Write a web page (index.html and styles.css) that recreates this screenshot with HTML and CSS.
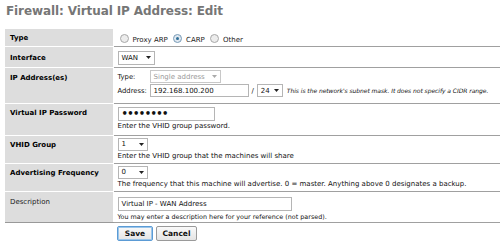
FILE: index.html
```html
<!DOCTYPE html>
<html>
<head>
<meta charset="utf-8">
<link rel="stylesheet" href="styles.css">
</head>
<body>
<div class="page">
  <h1 class="title">Firewall: Virtual IP Address: Edit</h1>
  <table class="form">
    <tr class="r-type">
      <td class="lbl req">Type</td>
      <td class="val">
        <span class="radio"></span><span class="rlabel">Proxy ARP</span>
        <span class="radio on"></span><span class="rlabel">CARP</span>
        <span class="radio"></span><span class="rlabel">Other</span>
      </td>
    </tr>
    <tr class="r-if">
      <td class="lbl req">Interface</td>
      <td class="val"><span class="sel sel-wan">WAN<svg class="arr" width="5" height="3" viewBox="0 0 5 3"><path d="M0 0H5L2.5 3Z"/></svg></span></td>
    </tr>
    <tr class="r-ip">
      <td class="lbl req">IP Address(es)</td>
      <td class="val">
        <div class="line"><span class="k">Type:</span><span class="sel sel-type dis">Single address<svg class="arr" width="5" height="3" viewBox="0 0 5 3"><path d="M0 0H5L2.5 3Z"/></svg></span></div>
        <div class="line"><span class="k">Address:</span><span class="inp inp-addr">192.168.100.200</span><span class="slash">/</span><span class="sel sel-mask">24<svg class="arr" width="5" height="3" viewBox="0 0 5 3"><path d="M0 0H5L2.5 3Z"/></svg></span><span class="note">This is the network's subnet mask. It does not specify a CIDR range.</span></div>
      </td>
    </tr>
    <tr class="r-pw">
      <td class="lbl req">Virtual IP Password</td>
      <td class="val">
        <span class="inp inp-pw">&#x2022;&#x2022;&#x2022;&#x2022;&#x2022;&#x2022;&#x2022;&#x2022;</span>
        <div class="help">Enter the VHID group password.</div>
      </td>
    </tr>
    <tr class="r-vhid">
      <td class="lbl req">VHID Group</td>
      <td class="val">
        <span class="sel sel-num">1<svg class="arr" width="5" height="3" viewBox="0 0 5 3"><path d="M0 0H5L2.5 3Z"/></svg></span>
        <div class="help">Enter the VHID group that the machines will share</div>
      </td>
    </tr>
    <tr class="r-adv">
      <td class="lbl req">Advertising Frequency</td>
      <td class="val">
        <span class="sel sel-num">0<svg class="arr" width="5" height="3" viewBox="0 0 5 3"><path d="M0 0H5L2.5 3Z"/></svg></span>
        <div class="help">The frequency that this machine will advertise. 0 = master. Anything above 0 designates a backup.</div>
      </td>
    </tr>
    <tr class="r-desc">
      <td class="lbl">Description</td>
      <td class="val">
        <span class="inp inp-desc">Virtual IP - WAN Address</span>
        <div class="help small">You may enter a description here for your reference (not parsed).</div>
      </td>
    </tr>
    <tr class="r-btn">
      <td class="blank"></td>
      <td class="btns"><span class="btn save">Save</span><span class="btn cancel">Cancel</span></td>
    </tr>
  </table>
</div>
</body>
</html>
```

FILE: styles.css
```css
html, body {
  margin: 0;
  padding: 0;
  background: #ffffff;
}
body {
  font-family: "DejaVu Sans", Verdana, sans-serif;
  font-size: 7px;
  color: #111;
}
.page {
  padding-left: 5px;
}
.title {
  margin: 0;
  padding: 4px 0 0 1px;
  height: 29px;
  box-sizing: border-box;
  font-size: 12px;
  font-weight: bold;
  color: #767676;
  letter-spacing: -0.1px;
}
.form {
  border-collapse: collapse;
  width: 495px;
}
.form td {
  padding: 0;
  vertical-align: top;
  box-sizing: border-box;
}
.lbl {
  width: 108px;
  background: #dddddd;
  border-bottom: 1px solid #ffffff;
  border-right: 1px solid #ffffff;
  padding: 5px 0 0 5px !important;
  font-weight: bold;
  font-size: 7px;
  color: #000;
}
.lbl:not(.req) {
  font-weight: normal;
  border-bottom-color: #999;
  color: #222;
}
.val {
  border-bottom: 1px solid #a0a0a0;
  padding: 2px 0 0 4px !important;
}
.r-type td { height: 17px; }
.r-if td { height: 21px; }
.r-ip td { height: 36px; }
.r-pw td { height: 32px; }
.r-vhid td { height: 28px; }
.r-adv td { height: 28px; }
.r-desc td { height: 31px; }
.r-type .lbl { padding-top: 5px !important; }
.r-type .val { padding-top: 5px !important; }
.r-if .lbl { padding-top: 7px !important; }
.r-if .val { padding-top: 4px !important; }
.r-ip .lbl { padding-top: 6px !important; }
.r-desc .lbl { padding-top: 6px !important; }

.radio {
  display: inline-block;
  width: 7px;
  height: 7px;
  border-radius: 50%;
  border: 1px solid #a8a8a8;
  background: #ececec;
  vertical-align: -1px;
  margin: 0 4px 0 2px;
  position: relative;
}
.radio.on {
  border-color: #7a9cb8;
  background: #dfe8f0;
}
.radio.on::after {
  content: "";
  position: absolute;
  left: 2px;
  top: 2px;
  width: 3px;
  height: 3px;
  border-radius: 50%;
  background: #2f6f98;
}
.rlabel {
  margin-right: 1px;
  color: #222;
}
.sel, .inp {
  display: inline-flex;
  align-items: center;
  box-sizing: border-box;
  height: 13px;
  border: 1px solid #b5b5b5;
  background: #fff;
  padding: 0 3px;
  vertical-align: middle;
  color: #111;
}
.sel .arr {
  margin-left: auto;
  fill: #222;
}
.sel.dis {
  color: #9a9a9a;
  border-color: #c8c8c8;
}
.sel.dis .arr { fill: #aaa; }
.sel-wan { width: 37px; height: 14px; }
.sel-type { width: 71px; }
.sel-mask { width: 26px; }
.sel-num { width: 30px; }
.inp-addr { width: 99px; }
.inp-pw {
  width: 97px;
  height: 14px;
  margin-top: 1px;
  font-size: 10px;
  font-weight: bold;
  letter-spacing: -0.6px;
  padding-left: 3px;
}
.inp-desc { width: 174px; height: 14px; margin-top: 3px; }
.line {
  display: flex;
  align-items: center;
  height: 14px;
}
.line .k {
  width: 32px;
  font-size: 6.8px;
}
.slash { margin: 0 3px; }
.note {
  margin-left: 4px;
  font-style: italic;
  font-size: 6px;
  letter-spacing: -0.05px;
}
.help {
  margin-top: 1px;
}
.help.small { font-size: 6.4px; margin-top: 2px; }
.btns {
  padding: 3px 0 0 4px !important;
  height: 20px;
}
.btn {
  display: inline-block;
  box-sizing: border-box;
  height: 15px;
  line-height: 13px;
  border: 1px solid #9a9a9a;
  border-radius: 2px;
  background: linear-gradient(#fafafa, #e4e4e4);
  font-weight: bold;
  font-size: 7.5px;
  text-align: center;
  margin-right: 3px;
  color: #111;
}
.save {
  width: 36px;
  border-color: #5b9bd5;
  box-shadow: inset 0 0 0 1px #9cc6ea;
}
.cancel { width: 41px; }
```
